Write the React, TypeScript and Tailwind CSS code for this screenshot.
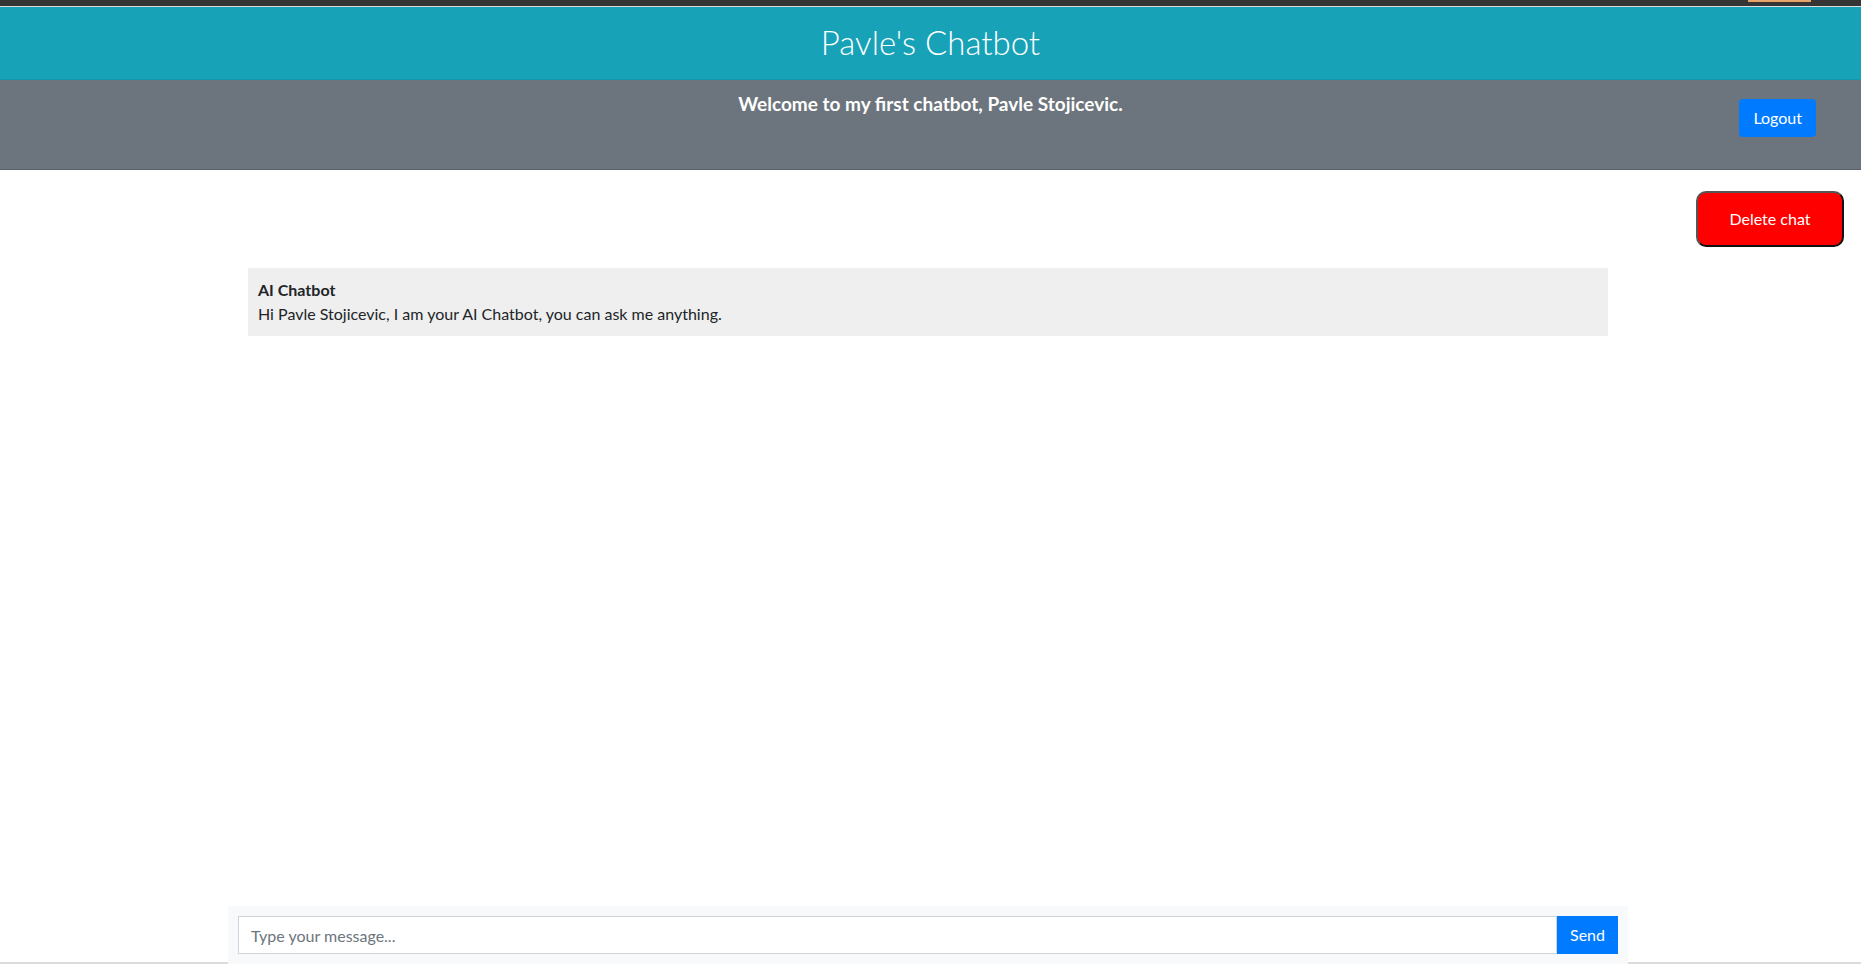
import { useState } from "react";

const App = () => {
  const [message, setMessage] = useState("");

  return (
    <div className="h-screen flex flex-col bg-white font-['Lato','Open_Sans',sans-serif] text-[#212529] overflow-hidden">
      {/* browser strip */}
      <div className="h-[6px] bg-[#353535] flex justify-end pr-[50px]">
        <div className="w-[63px] h-[2px] bg-[#e8a36a]" />
      </div>
      <div className="h-px bg-[#dedede]" />

      {/* Title */}
      <header className="h-[73px] bg-[#17a2b8] border-b border-[#1597ab] flex items-center justify-center">
        <h1 className="text-[33px] font-light text-white leading-none font-['Lato',sans-serif] pb-[2px]">
          Pavle's Chatbot
        </h1>
      </header>

      {/* Welcome bar */}
      <div className="h-[90px] bg-[#6c757d] border-b border-[#5b636a] grid grid-cols-[1fr_auto_1fr]">
        <div />
        <h5 className="pt-[12px] text-[19px] font-bold text-white leading-tight">
          Welcome to my first chatbot, Pavle Stojicevic.
        </h5>
        <div className="flex justify-end items-start pt-[19px] pr-[45px]">
          <button className="h-[38px] px-[14px] rounded bg-[#007bff] text-white text-base">
            Logout
          </button>
        </div>
      </div>

      {/* Chat */}
      <main className="flex-1 flex flex-col pr-[5px]">
        <div className="flex justify-end pt-[21px] pr-[12px]">
          <button className="w-[148px] h-[56px] rounded-[10px] bg-[#ff0000] text-white text-base border-2 border-t-[#555] border-l-[#555] border-r-[#111] border-b-[#111]">
            Delete chat
          </button>
        </div>

        <div className="w-[1360px] mx-auto mt-[21px] flex flex-col gap-2">
          <div className="bg-[#efefef] px-[10px] py-[10px] text-base leading-6">
            <div className="font-bold">AI Chatbot</div>
            <div>Hi Pavle Stojicevic, I am your AI Chatbot, you can ask me anything.</div>
          </div>
        </div>
      </main>

      {/* Input */}
      <div className="border-b-2 border-[#dcdcdc] flex justify-center pr-[5px]">
        <div className="w-[1400px] bg-[#f8f9fa] p-[10px] flex relative -mb-[2px]">
          <input
            value={message}
            onChange={(e) => setMessage(e.target.value)}
            placeholder="Type your message..."
            className="flex-1 h-[38px] border border-[#ced4da] bg-white px-3 text-base text-[#495057] placeholder:text-[#6c757d] outline-none"
          />
          <button className="w-[61px] h-[38px] bg-[#007bff] text-white text-base">Send</button>
        </div>
      </div>
    </div>
  );
};

export default App;
